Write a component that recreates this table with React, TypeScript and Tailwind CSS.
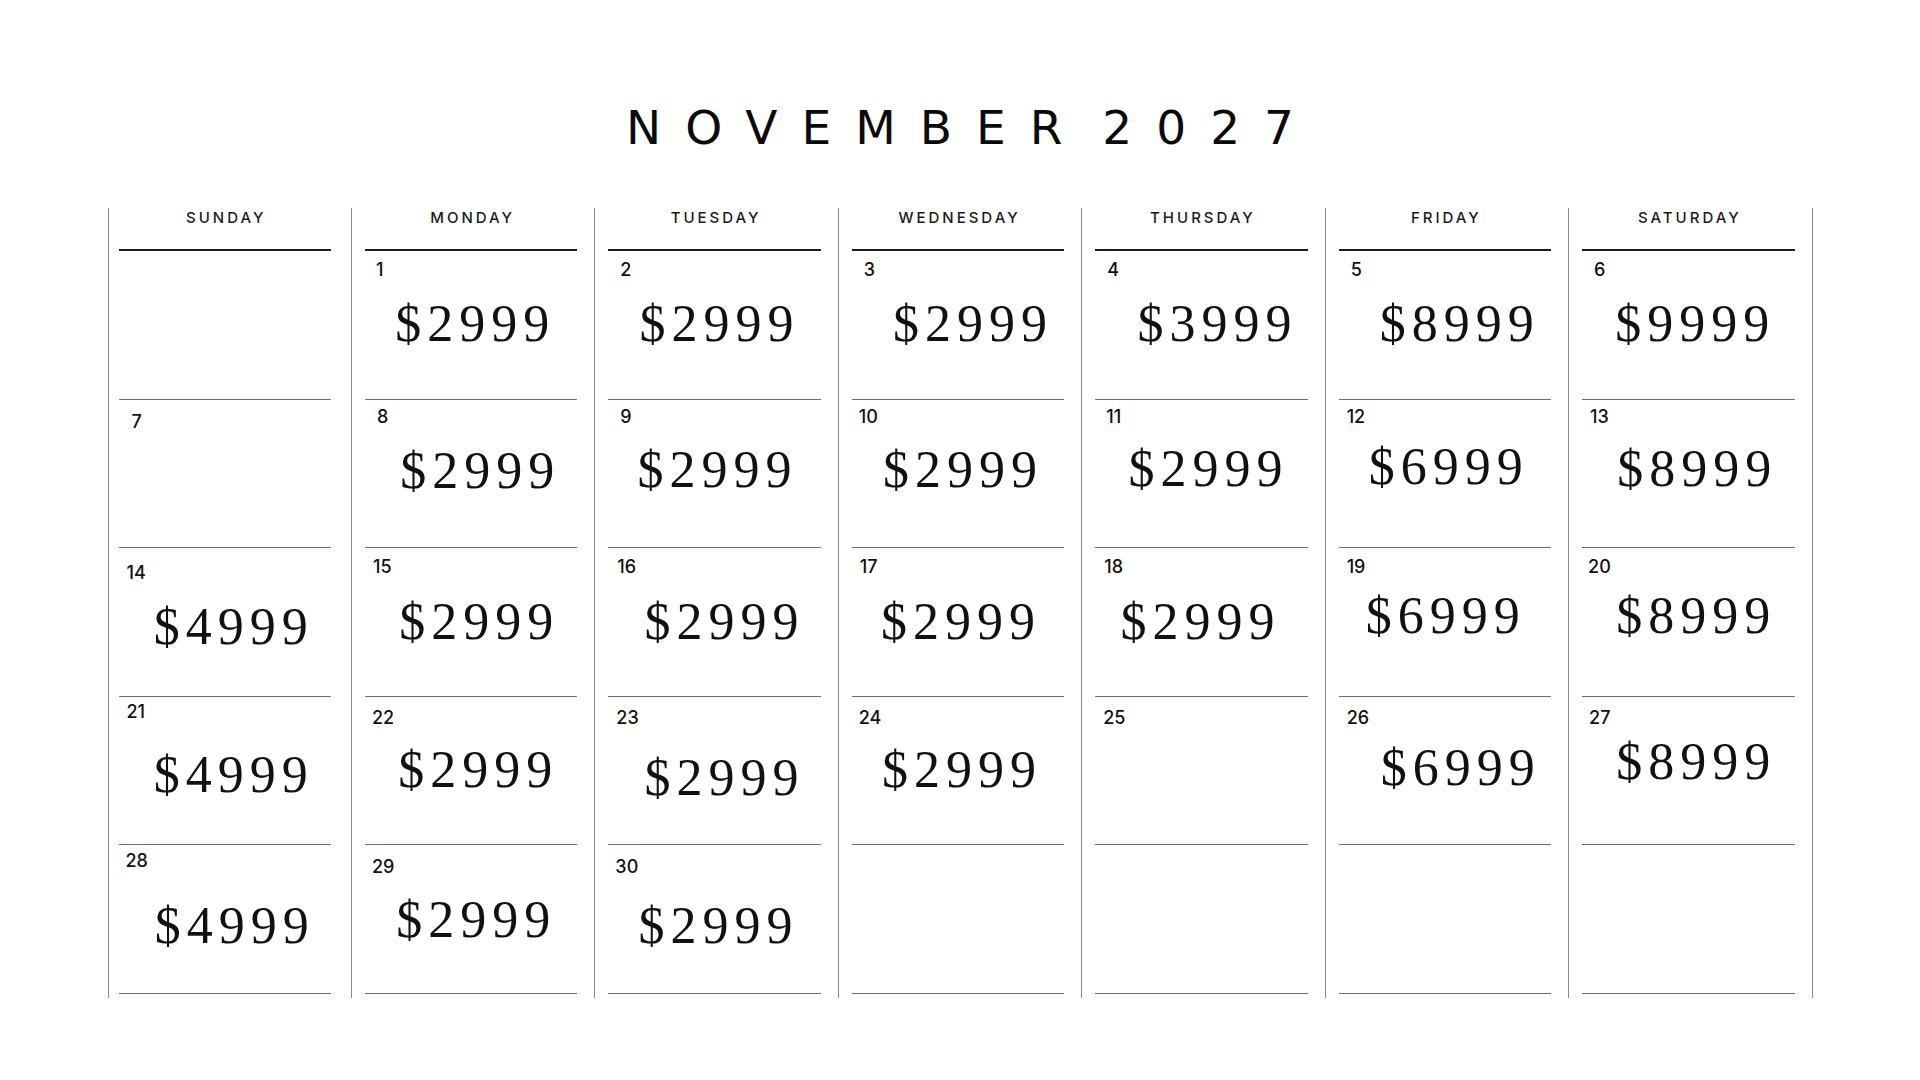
type Cell = {
  day?: number;
  price?: string;
  numCls?: string;
  priceCls?: string;
};

const DAYS = ['SUNDAY', 'MONDAY', 'TUESDAY', 'WEDNESDAY', 'THURSDAY', 'FRIDAY', 'SATURDAY'];

// weeks, one array per row, sunday first
const WEEKS: Cell[][] = [
  [
    {},
    { day: 1, price: '$2999', numCls: 'pt-[10px] pl-[11px]', priceCls: 'translate-x-[1px] translate-y-[-1px]' },
    { day: 2, price: '$2999', numCls: 'pt-[10px] pl-[12px]', priceCls: 'translate-x-[2px] translate-y-[-1px]' },
    { day: 3, price: '$2999', numCls: 'pt-[10px] pl-[12px]', priceCls: 'translate-x-[12px] translate-y-[-1px]' },
    { day: 4, price: '$3999', numCls: 'pt-[10px] pl-[12px]', priceCls: 'translate-x-[13px] translate-y-[-1px]' },
    { day: 5, price: '$8999', numCls: 'pt-[10px] pl-[12px]', priceCls: 'translate-x-[12px] translate-y-[-1px]' },
    { day: 6, price: '$9999', numCls: 'pt-[10px] pl-[12px]', priceCls: 'translate-x-[4px] translate-y-[-1px]' },
  ],
  [
    { day: 7, numCls: 'pt-[13px] pl-[13px]' },
    { day: 8, price: '$2999', numCls: 'pt-[8px] pl-[12px]', priceCls: 'translate-x-[6px] translate-y-[-2px]' },
    { day: 9, price: '$2999', numCls: 'pt-[8px] pl-[12px]', priceCls: 'translate-x-[0px] translate-y-[-3px]' },
    { day: 10, price: '$2999', numCls: 'pt-[8px] pl-[7px]', priceCls: 'translate-x-[2px] translate-y-[-3px]' },
    { day: 11, price: '$2999', numCls: 'pt-[8px] pl-[11px]', priceCls: 'translate-x-[4px] translate-y-[-4px]' },
    { day: 12, price: '$6999', numCls: 'pt-[8px] pl-[8px]', priceCls: 'translate-x-[1px] translate-y-[-6px]' },
    { day: 13, price: '$8999', numCls: 'pt-[8px] pl-[8px]', priceCls: 'translate-x-[6px] translate-y-[-4px]' },
  ],
  [
    { day: 14, price: '$4999', numCls: 'pt-[16px] pl-[8px]', priceCls: 'translate-x-[6px] translate-y-[5px]' },
    { day: 15, price: '$2999', numCls: 'pt-[10px] pl-[8px]', priceCls: 'translate-x-[5px] translate-y-[0px]' },
    { day: 16, price: '$2999', numCls: 'pt-[10px] pl-[9px]', priceCls: 'translate-x-[7px] translate-y-[0px]' },
    { day: 17, price: '$2999', numCls: 'pt-[10px] pl-[8px]', priceCls: 'translate-x-[0px] translate-y-[0px]' },
    { day: 18, price: '$2999', numCls: 'pt-[10px] pl-[9px]', priceCls: 'translate-x-[-4px] translate-y-[0px]' },
    { day: 19, price: '$6999', numCls: 'pt-[10px] pl-[8px]', priceCls: 'translate-x-[-2px] translate-y-[-6px]' },
    { day: 20, price: '$8999', numCls: 'pt-[10px] pl-[6px]', priceCls: 'translate-x-[5px] translate-y-[-6px]' },
  ],
  [
    { day: 21, price: '$4999', numCls: 'pt-[6px] pl-[8px]', priceCls: 'translate-x-[6px] translate-y-[5px]' },
    { day: 22, price: '$2999', numCls: 'pt-[12px] pl-[7px]', priceCls: 'translate-x-[4px] translate-y-[0px]' },
    { day: 23, price: '$2999', numCls: 'pt-[12px] pl-[8px]', priceCls: 'translate-x-[7px] translate-y-[8px]' },
    { day: 24, price: '$2999', numCls: 'pt-[12px] pl-[7px]', priceCls: 'translate-x-[1px] translate-y-[0px]' },
    { day: 25, numCls: 'pt-[12px] pl-[8px]' },
    { day: 26, price: '$6999', numCls: 'pt-[12px] pl-[8px]', priceCls: 'translate-x-[13px] translate-y-[-2px]' },
    { day: 27, price: '$8999', numCls: 'pt-[12px] pl-[7px]', priceCls: 'translate-x-[5px] translate-y-[-8px]' },
  ],
  [
    { day: 28, price: '$4999', numCls: 'pt-[7px] pl-[7px]', priceCls: 'translate-x-[7px] translate-y-[7px]' },
    { day: 29, price: '$2999', numCls: 'pt-[13px] pl-[7px]', priceCls: 'translate-x-[2px] translate-y-[1px]' },
    { day: 30, price: '$2999', numCls: 'pt-[13px] pl-[7px]', priceCls: 'translate-x-[1px] translate-y-[7px]' },
    {},
    {},
    {},
    {},
  ],
];

function DayCell({ cell }: { cell: Cell }) {
  return (
    <div className="grid h-[148.5px] border-b-[1.5px] border-[#6e6e6e]">
      {cell.day && (
        <span
          className={`col-start-1 row-start-1 self-start justify-self-start font-['Inter',sans-serif] text-[18px] font-medium leading-[18px] text-[#111] ${cell.numCls}`}
        >
          {cell.day}
        </span>
      )}
      {cell.price && (
        <span
          className={`col-start-1 row-start-1 self-center justify-self-center pl-[6px] font-['Liberation_Serif',serif] text-[52px] leading-[52px] tracking-[6px] text-[#111] ${cell.priceCls}`}
        >
          {cell.price}
        </span>
      )}
    </div>
  );
}

export default function App() {
  return (
    <div className="min-h-[1080px] w-full bg-white pt-[105px]">
      <h1 className="flex h-[46px] justify-center gap-[16px] pl-[24px] font-['DejaVu_Sans',sans-serif] text-[47px] font-normal leading-[46px] tracking-[24px] text-[#0a0a0a]">
        <span>NOVEMBER</span>
        <span>2027</span>
      </h1>

      <div className="mx-auto mt-[57px] grid w-[1705px] grid-cols-7 border-r-[1.5px] border-[#8a8a8a]">
        {DAYS.map((d, col) => (
          <div
            key={d}
            className={
              col === 0
                ? 'flex flex-col border-l-[1.5px] border-[#8a8a8a] pb-[4px] pl-[10px] pr-[20px]'
                : 'flex flex-col border-l-[1.5px] border-[#8a8a8a] pb-[4px] pl-[13px] pr-[17px]'
            }
          >
            <div className="flex h-[43px] justify-center border-b-2 border-[#1c1c1c]">
              <span className="pl-[3px] font-['Inter',sans-serif] text-[15px] font-medium leading-[20px] tracking-[3px] text-[#1a1a1a]">
                {d}
              </span>
            </div>
            {WEEKS.map((w, row) => (
              <DayCell key={row} cell={w[col]} />
            ))}
          </div>
        ))}
      </div>
    </div>
  );
}
